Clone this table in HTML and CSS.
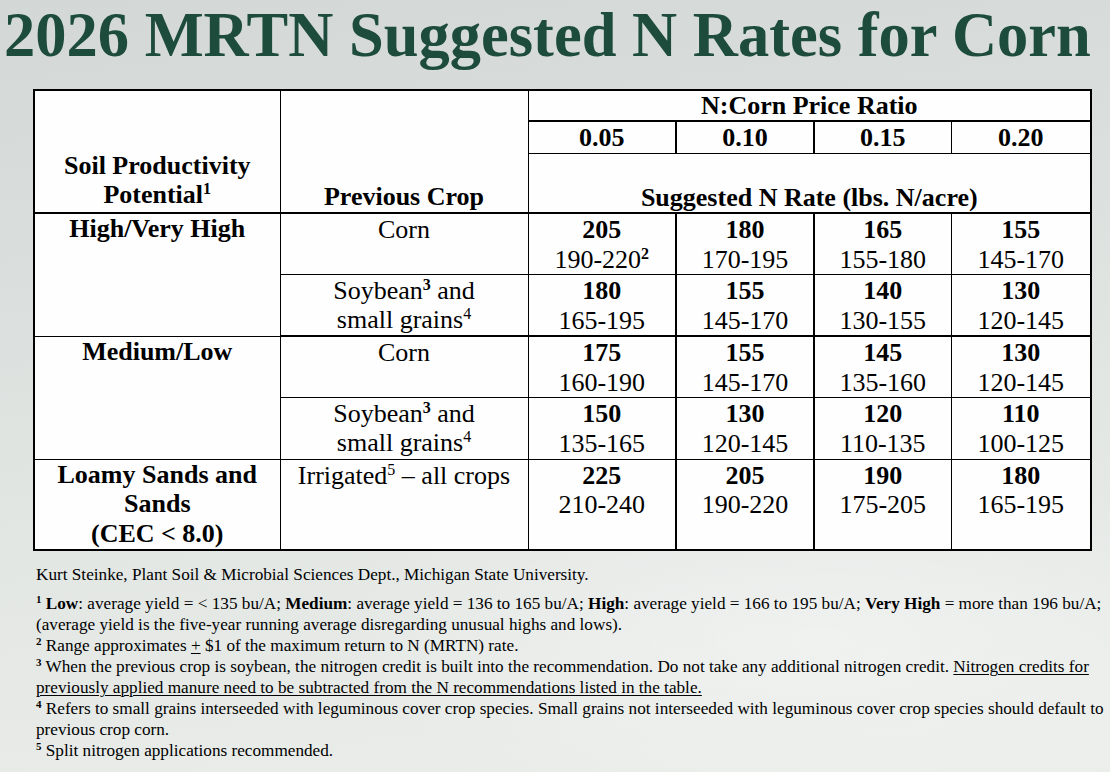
FILE: index.html
```html
<!DOCTYPE html>
<html lang="en">
<head>
<meta charset="utf-8">
<title>2026 MRTN Suggested N Rates for Corn</title>
<link rel="stylesheet" href="styles.css">
</head>
<body>
<div class="slide">
  <h1 class="title">2026 MRTN Suggested N Rates for Corn</h1>

  <table class="rates">
    <colgroup>
      <col class="c-soil">
      <col class="c-crop">
      <col class="c-r1">
      <col class="c-r2">
      <col class="c-r3">
      <col class="c-r4">
    </colgroup>
    <tbody>
      <tr class="h1">
        <th rowspan="3" class="hd-bottom soil-hd">Soil Productivity<br>Potential<sup class="sb">1</sup></th>
        <th rowspan="3" class="hd-bottom crop-hd">Previous Crop</th>
        <th colspan="4" class="ratio-hd">N:Corn Price Ratio</th>
      </tr>
      <tr class="h2">
        <th class="rv thick-r">0.05</th>
        <th class="rv thick-r">0.10</th>
        <th class="rv">0.15</th>
        <th class="rv">0.20</th>
      </tr>
      <tr class="h3">
        <th colspan="4" class="hd-bottom rate-hd">Suggested N Rate (lbs. N/acre)</th>
      </tr>

      <tr class="data">
        <th rowspan="2" class="soil">High/Very High</th>
        <td class="crop">Corn</td>
        <td class="num"><b>205</b><br>190-220<sup class="sb">2</sup></td>
        <td class="num thick-l thick-r"><b>180</b><br>170-195</td>
        <td class="num"><b>165</b><br>155-180</td>
        <td class="num"><b>155</b><br>145-170</td>
      </tr>
      <tr class="data group-end">
        <td class="crop">Soybean<sup class="sb">3</sup> and<br>small grains<sup>4</sup></td>
        <td class="num"><b>180</b><br>165-195</td>
        <td class="num thick-l thick-r"><b>155</b><br>145-170</td>
        <td class="num"><b>140</b><br>130-155</td>
        <td class="num"><b>130</b><br>120-145</td>
      </tr>

      <tr class="data">
        <th rowspan="2" class="soil">Medium/Low</th>
        <td class="crop">Corn</td>
        <td class="num"><b>175</b><br>160-190</td>
        <td class="num thick-l thick-r"><b>155</b><br>145-170</td>
        <td class="num"><b>145</b><br>135-160</td>
        <td class="num"><b>130</b><br>120-145</td>
      </tr>
      <tr class="data">
        <td class="crop">Soybean<sup class="sb">3</sup> and<br>small grains<sup>4</sup></td>
        <td class="num"><b>150</b><br>135-165</td>
        <td class="num thick-l thick-r"><b>130</b><br>120-145</td>
        <td class="num"><b>120</b><br>110-135</td>
        <td class="num"><b>110</b><br>100-125</td>
      </tr>

      <tr class="data last">
        <th class="soil">Loamy Sands and<br>Sands<br>(CEC &lt; 8.0)</th>
        <td class="crop">Irrigated<sup>5</sup> – all crops</td>
        <td class="num"><b>225</b><br>210-240</td>
        <td class="num thick-l thick-r"><b>205</b><br>190-220</td>
        <td class="num"><b>190</b><br>175-205</td>
        <td class="num"><b>180</b><br>165-195</td>
      </tr>
    </tbody>
  </table>

  <div class="notes">
    <p class="credit">Kurt Steinke, Plant Soil &amp; Microbial Sciences Dept., Michigan State University.</p>
    <p><sup class="fn">1</sup> <b>Low</b>: average yield = &lt; 135 bu/A; <b>Medium</b>: average yield = 136 to 165 bu/A; <b>High</b>: average yield = 166 to 195 bu/A; <b>Very High</b> = more than 196 bu/A;<br>(average yield is the five-year running average disregarding unusual highs and lows).</p>
    <p><sup class="fn">2</sup> Range approximates <u>+</u> $1 of the maximum return to N (MRTN) rate.</p>
    <p><sup class="fn">3</sup> When the previous crop is soybean, the nitrogen credit is built into the recommendation. Do not take any additional nitrogen credit. <u>Nitrogen credits for</u><br><u>previously applied manure need to be subtracted from the N recommendations listed in the table.</u></p>
    <p><sup class="fn">4</sup> Refers to small grains interseeded with leguminous cover crop species. Small grains not interseeded with leguminous cover crop species should default to<br>previous crop corn.</p>
    <p><sup class="fn">5</sup> Split nitrogen applications recommended.</p>
  </div>
</div>
</body>
</html>
```

FILE: styles.css
```css
html, body {
  margin: 0;
  padding: 0;
}

body {
  width: 1110px;
  height: 772px;
  overflow: hidden;
  font-family: "Liberation Serif", "Tinos", "Times New Roman", Times, serif;
  color: #000;
  background:
    radial-gradient(ellipse 700px 260px at 820px 640px, rgba(255,255,255,0.35), rgba(255,255,255,0) 70%),
    linear-gradient(172deg, #d3d8d6 0%, #dadedc 30%, #e3e7e4 60%, #ebeeeb 100%);
}

.slide {
  display: flex;
  flex-direction: column;
  align-items: flex-start;
}

.title {
  margin: 0 0 0 4px;
  font-family: "Liberation Serif", "Tinos", "Times New Roman", Times, serif;
  font-size: 62.5px;
  line-height: 70px;
  font-weight: 700;
  color: #1d4c3d;
  white-space: nowrap;
}

/* ---------- table ---------- */
.rates {
  margin: 19px 0 0 33px;
  border-collapse: collapse;
  table-layout: fixed;
  width: 1057px;
  background: #fefefe;
  border: 2px solid #000;
  font-family: "Liberation Serif", "Tinos", "Times New Roman", Times, serif;
  font-size: 26px;
  line-height: 29px;
}

.c-soil { width: 246px; }
.c-crop { width: 248px; }
.c-r1 { width: 148px; }
.c-r2 { width: 138px; }
.c-r3 { width: 137px; }
.c-r4 { width: 140px; }

.rates th,
.rates td {
  border: 1px solid #000;
  padding: 0;
  text-align: center;
  vertical-align: top;
  overflow: hidden;
  white-space: nowrap;
}

.rates th { font-weight: 700; }

.rates tr.h1 { height: 31px; }
.rates tr.h2 { height: 32px; }
.rates tr.h3 { height: 60px; }
.rates tr.data { height: 61.5px; }
.rates tr.last { height: 91px; }

.ratio-hd {
  vertical-align: middle !important;
  border-bottom: 2px solid #000 !important;
}

.rv { vertical-align: middle !important; }

.hd-bottom {
  vertical-align: bottom !important;
  border-bottom: 2px solid #000 !important;
}

.soil-hd { padding-bottom: 3px !important; }
.crop-hd { padding-bottom: 1px !important; }
.rate-hd { padding-bottom: 0 !important; line-height: 28px; }

.soil { padding-top: 0 !important; line-height: 29.5px; }
.crop { font-weight: 400; padding-top: 1px !important; line-height: 29px; }
.num { padding-top: 1px !important; line-height: 29.5px; }
.num b { font-weight: 700; }

.group-end td,
.group-end th { border-bottom: 2px solid #000 !important; }

.thick-l { border-left: 2px solid #000 !important; }
.thick-r { border-right: 2px solid #000 !important; }

.rates sup {
  font-size: 16px;
  line-height: 0;
  vertical-align: 9px;
}
.rates sup.sb { font-weight: 700; }

/* ---------- notes ---------- */
.notes {
  margin: 13px 0 0 36px;
  font-family: "Liberation Serif", "Tinos", "Times New Roman", Times, serif;
  font-size: 17.2px;
  line-height: 21px;
  white-space: nowrap;
}

.notes p { margin: 0; }
.notes .credit { margin-bottom: 8px; }

.notes sup.fn {
  font-size: 11px;
  font-weight: 700;
  line-height: 0;
  vertical-align: 6px;
}

.notes u {
  text-decoration-thickness: 1px;
  text-underline-offset: 2px;
}
```
